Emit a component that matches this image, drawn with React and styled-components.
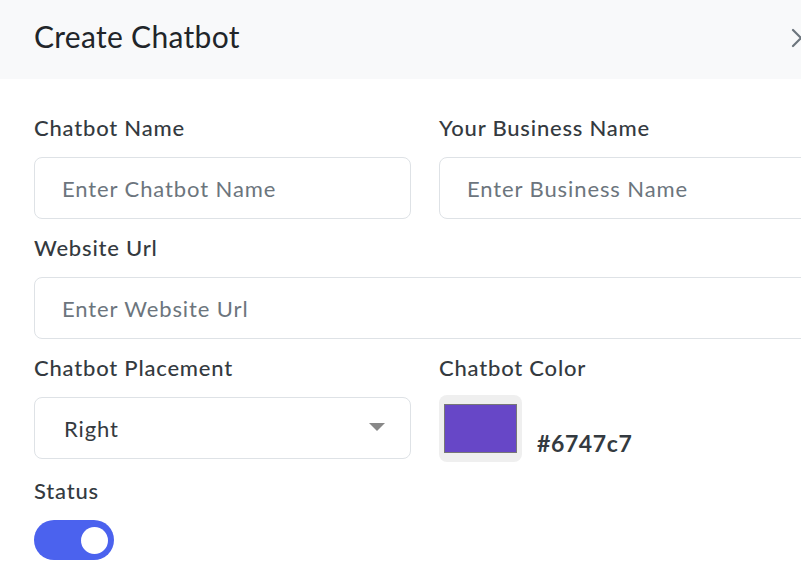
import styled, { createGlobalStyle } from 'styled-components';

const GlobalStyle = createGlobalStyle`
  body{
    margin: 0;
    background: #fff;
    font-family: Lato, "Open Sans", sans-serif;
    overflow: hidden;
  }
`

export default function App() {
  return (
    <>
      <GlobalStyle />
      <Modal>
        <Header>
          <Title>Create Chatbot</Title>
          <CloseBtn aria-label="Close">
            <svg width="20" height="20" viewBox="0 0 20 20" fill="none" stroke="#6c757d" strokeWidth="2.2" strokeLinecap="round">
              <path d="M2 2 L18 18 M18 2 L2 18" />
            </svg>
          </CloseBtn>
        </Header>

        <Body>
          <Row>
            <Group>
              <Label>Chatbot Name</Label>
              <Input placeholder="Enter Chatbot Name" />
            </Group>
            <Group>
              <Label>Your Business Name</Label>
              <Input placeholder="Enter Business Name" />
            </Group>
          </Row>

          <Group>
            <Label>Website Url</Label>
            <Input placeholder="Enter Website Url" />
          </Group>

          <Row>
            <Group>
              <Label>Chatbot Placement</Label>
              <SelectWrap>
                <Select defaultValue="right">
                  <option value="right">Right</option>
                  <option value="left">Left</option>
                </Select>
                <Caret />
              </SelectWrap>
            </Group>
            <Group>
              <Label>Chatbot Color</Label>
              <ColorRow>
                <Swatch>
                  <SwatchFill color="#6747c7" />
                </Swatch>
                <Hex>#6747c7</Hex>
              </ColorRow>
            </Group>
          </Row>

          <Group>
            <Label>Status</Label>
            <Toggle on={1}>
              <Knob />
            </Toggle>
          </Group>
        </Body>
      </Modal>
    </>
  )
}

const Modal = styled.div`
  width: 850px;
  background: #fff;
`

const Header = styled.div`
  display: flex;
  align-items: flex-start;
  height: 79px;
  box-sizing: border-box;
  padding: 18px 39px 0 34px;
  background: #f8f9fa;
`

const Title = styled.h5`
  margin: 0;
  font-size: 30px;
  line-height: 36px;
  font-weight: 400;
  letter-spacing: 0.3px;
  color: #212529;
`

const CloseBtn = styled.button`
  margin-left: auto;
  margin-top: 10px;
  padding: 0;
  border: 0;
  background: none;
  width: 20px;
  height: 20px;
  display: flex;
`

const Body = styled.div`
  padding: 34px 34px;
`

const Row = styled.div`
  display: grid;
  grid-template-columns: 377px 377px;
  column-gap: 28px;
`

const Group = styled.div`
  margin-bottom: 14px;
`

const Label = styled.label`
  display: block;
  font-size: 22px;
  line-height: 30px;
  font-weight: 500;
  letter-spacing: 0.8px;
  color: #343a40;
  margin-bottom: 14px;
`

const Input = styled.input`
  display: block;
  width: 100%;
  box-sizing: border-box;
  height: 62px;
  padding: 0 27px;
  border: 1px solid #dee2e6;
  border-radius: 8px;
  font-family: inherit;
  font-size: 22px;
  letter-spacing: 0.9px;
  color: #343a40;
  background: #fff;
  outline: none;

  &::placeholder{
    color: #6c757d;
    opacity: 1;
  }
`

const SelectWrap = styled.div`
  position: relative;
`

const Select = styled.select`
  display: block;
  width: 100%;
  height: 62px;
  box-sizing: border-box;
  padding: 0 29px;
  border: 1px solid #dee2e6;
  border-radius: 8px;
  font-family: inherit;
  font-size: 22px;
  letter-spacing: 0.9px;
  color: #343a40;
  background: #fff;
  appearance: none;
  outline: none;
`

const Caret = styled.span`
  position: absolute;
  left: 335px;
  top: 26px;
  width: 0;
  height: 0;
  border-left: 8px solid transparent;
  border-right: 8px solid transparent;
  border-top: 8px solid #888;
  pointer-events: none;
`

const ColorRow = styled.div`
  display: flex;
  align-items: flex-end;
  margin-top: -2px;
`

const Swatch = styled.div`
  width: 83px;
  height: 67px;
  box-sizing: border-box;
  padding: 9px 5px;
  border-radius: 8px;
  background: #efefef;
`

const SwatchFill = styled.div`
  width: 100%;
  height: 100%;
  box-sizing: border-box;
  border: 1px solid #777;
  background: ${({color})=>color};
`

const Hex = styled.span`
  margin-left: 15px;
  padding-bottom: 4px;
  font-size: 23px;
  line-height: 1.2;
  font-weight: 700;
  letter-spacing: 0.6px;
  color: #343a40;
`

const Toggle = styled.div`
  width: 80px;
  height: 40px;
  box-sizing: border-box;
  padding: 6.5px;
  border-radius: 20px;
  display: flex;
  justify-content: ${({on})=>on ? 'flex-end' : 'flex-start'};
  background: ${({on})=>on ? '#4b62ee' : '#ced4da'};
`

const Knob = styled.div`
  width: 27px;
  height: 27px;
  border-radius: 50%;
  background: #fff;
`
